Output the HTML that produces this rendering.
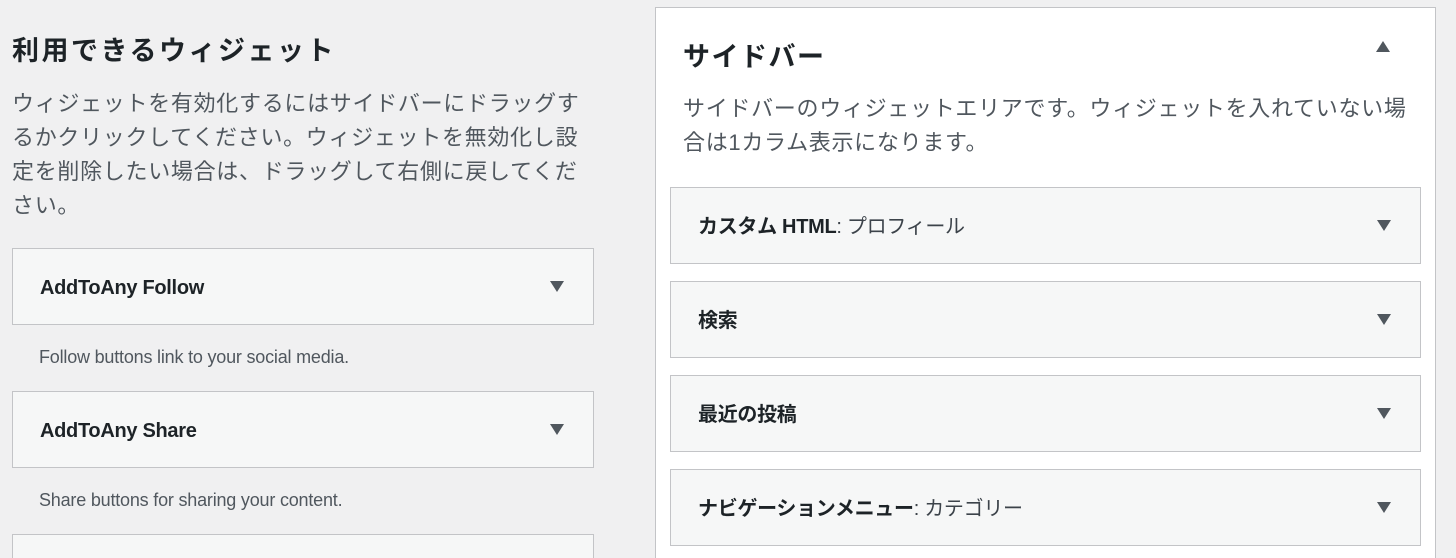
<!DOCTYPE html>
<html><head><meta charset="utf-8"><style>
html,body{margin:0;width:1456px;height:558px;overflow:hidden}
body{background:#f0f0f1;font-family:"Liberation Sans","Noto Sans CJK JP",sans-serif;color:#1d2327;position:relative}
.abs{position:absolute}
h2{margin:0;font-size:27px;font-weight:bold;letter-spacing:2.5px;white-space:nowrap}
.desc{font-size:22px;line-height:34px;color:#50575e;letter-spacing:0.7px}
.w{position:absolute;background:#f6f7f7;border:1px solid #c3c4c7;box-sizing:border-box;height:77px}
.w .t{position:absolute;left:27px;top:2px;line-height:75px;font-size:20px;font-weight:bold;white-space:nowrap;letter-spacing:-0.3px}
.w .t span{font-weight:normal;color:#3c434a}
.arr{position:absolute;width:0;height:0;border-left:7px solid transparent;border-right:7px solid transparent;border-top:11px solid #50575e;top:32px}
.wd{position:absolute;left:39px;font-size:18px;color:#50575e;letter-spacing:-0.2px}
</style></head><body>
<h2 class="abs" style="left:12px;top:29px">利用できるウィジェット</h2>
<div class="abs desc" style="left:12px;top:87px;width:582px">ウィジェットを有効化するにはサイドバーにドラッグするかクリックしてください。ウィジェットを無効化し設定を削除したい場合は、ドラッグして右側に戻してください。</div>

<div class="w" style="left:12px;top:248px;width:582px"><div class="t">AddToAny Follow</div><div class="arr" style="left:537px"></div></div>
<div class="wd" style="top:347px">Follow buttons link to your social media.</div>
<div class="w" style="left:12px;top:391px;width:582px"><div class="t">AddToAny Share</div><div class="arr" style="left:537px"></div></div>
<div class="wd" style="top:490px">Share buttons for sharing your content.</div>
<div class="w" style="left:12px;top:534px;width:582px;height:24px;border-bottom:none"></div>

<div class="abs" style="left:655px;top:7px;width:781px;height:551px;background:#fff;border:1px solid #c3c4c7;border-bottom:none;box-sizing:border-box"></div>
<h2 class="abs" style="left:683px;top:35px;letter-spacing:1.5px">サイドバー</h2>
<div class="abs" style="left:1376px;top:41px;width:0;height:0;border-left:7px solid transparent;border-right:7px solid transparent;border-bottom:11px solid #50575e"></div>
<div class="abs desc" style="left:683px;top:92px;width:730px">サイドバーのウィジェットエリアです。ウィジェットを入れていない場合は1カラム表示になります。</div>

<div class="w" style="left:670px;top:187px;width:751px"><div class="t">カスタム HTML<span>: プロフィール</span></div><div class="arr" style="left:706px"></div></div>
<div class="w" style="left:670px;top:281px;width:751px"><div class="t">検索</div><div class="arr" style="left:706px"></div></div>
<div class="w" style="left:670px;top:375px;width:751px"><div class="t">最近の投稿</div><div class="arr" style="left:706px"></div></div>
<div class="w" style="left:670px;top:469px;width:751px"><div class="t">ナビゲーションメニュー<span>: カテゴリー</span></div><div class="arr" style="left:706px"></div></div>
</body></html>
